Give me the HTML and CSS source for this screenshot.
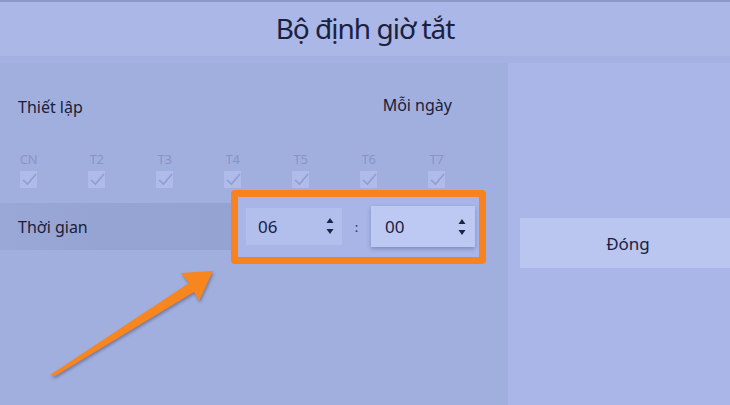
FILE: index.html
```html
<!DOCTYPE html>
<html lang="vi">
<head>
<meta charset="utf-8">
<link rel="stylesheet" href="styles.css">
</head>
<body>
<div class="screen">
  <header class="header"><h1 class="title">Bộ định giờ tắt</h1></header>
  <div class="main">
    <section class="left">
      <div class="setting">
        <span class="label">Thiết lập</span>
        <span class="value">Mỗi ngày</span>
      </div>
      <div class="days">
        <div class="day"><span class="dname">CN</span><span class="check"><svg viewBox="0 0 17 17"><path d="M3 9 L7.5 13 L16 3"/></svg></span></div>
        <div class="day"><span class="dname">T2</span><span class="check"><svg viewBox="0 0 17 17"><path d="M3 9 L7.5 13 L16 3"/></svg></span></div>
        <div class="day"><span class="dname">T3</span><span class="check"><svg viewBox="0 0 17 17"><path d="M3 9 L7.5 13 L16 3"/></svg></span></div>
        <div class="day"><span class="dname">T4</span><span class="check"><svg viewBox="0 0 17 17"><path d="M3 9 L7.5 13 L16 3"/></svg></span></div>
        <div class="day"><span class="dname">T5</span><span class="check"><svg viewBox="0 0 17 17"><path d="M3 9 L7.5 13 L16 3"/></svg></span></div>
        <div class="day"><span class="dname">T6</span><span class="check"><svg viewBox="0 0 17 17"><path d="M3 9 L7.5 13 L16 3"/></svg></span></div>
        <div class="day"><span class="dname">T7</span><span class="check"><svg viewBox="0 0 17 17"><path d="M3 9 L7.5 13 L16 3"/></svg></span></div>
      </div>
      <div class="time-row">
        <div class="time-label">Thời gian</div>
        <div class="picker">
          <div class="field hour">
            <span class="num">06</span>
            <svg class="spin" viewBox="0 0 8 18"><path d="M4 1 L7.5 6 L0.5 6 Z"/><path d="M0.5 12 L7.5 12 L4 17 Z"/></svg>
          </div>
          <div class="colon">:</div>
          <div class="field minute">
            <span class="num">00</span>
            <svg class="spin" viewBox="0 0 8 18"><path d="M4 1 L7.5 6 L0.5 6 Z"/><path d="M0.5 12 L7.5 12 L4 17 Z"/></svg>
          </div>
        </div>
      </div>
    </section>
    <section class="right">
      <div class="close-btn">Đóng</div>
    </section>
  </div>
  <svg class="arrow" viewBox="0 0 730 405">
    <polygon points="50,375 189,283 181,273 213,271 199,301 194,292 55,376"/>
  </svg>
</div>
</body>
</html>
```
FILE: styles.css
```css
* { box-sizing: border-box; }
html, body { margin: 0; padding: 0; }
body {
  width: 730px;
  height: 405px;
  overflow: hidden;
  background: #a6b3e3;
  font-family: "Noto Sans", "Open Sans", sans-serif;
  color: #1b2240;
}
.screen {
  position: relative;
  width: 730px;
  height: 405px;
  background: #a4b1e2;
}
.header {
  height: 56px;
  background: #aab7e7;
  border-top: 2px solid #8c98c6;
  display: flex;
  align-items: center;
  justify-content: center;
}
.title {
  margin: 0;
  font-size: 28px;
  font-weight: 400;
  letter-spacing: -1px;
  color: #1a2140;
  margin-top: -3px;
}
.main {
  display: flex;
  margin-top: 7px;
  height: 342px;
}
.left {
  width: 508px;
  background: #a1afdf;
}
.right {
  flex: 1;
  background: #a9b6e7;
  padding-top: 155px;
  padding-left: 12px;
}
.setting {
  margin-top: 24px;
  height: 40px;
  display: flex;
  align-items: center;
  justify-content: space-between;
  padding: 0 56px 0 18px;
  font-size: 16px;
  color: #1a2038;
}
.value { margin-top: -4px; }
.days {
  display: flex;
  gap: 51px;
  padding-left: 20px;
  margin-top: 24px;
  height: 39px;
}
.day {
  width: 17px;
  display: flex;
  flex-direction: column;
  align-items: center;
}
.dname {
  font-size: 13px;
  line-height: 17px;
  color: #8894c8;
  white-space: nowrap;
  letter-spacing: -0.3px;
}
.check {
  display: block;
  width: 17px;
  height: 17px;
  background: #afbbe9;
  margin-top: 3px;
}
.check svg {
  display: block;
  width: 17px;
  height: 17px;
  fill: none;
  stroke: #8f9dd2;
  stroke-width: 1.6;
}
.time-row {
  margin-top: 13px;
  height: 47px;
  display: flex;
  align-items: center;
}
.time-label {
  width: 231px;
  height: 47px;
  background: linear-gradient(90deg, #9aa8d8 0%, #96a4d4 40%, #95a3d3 100%);
  padding-left: 18px;
  display: flex;
  align-items: center;
  font-size: 16px;
  color: #1a2038;
}
.picker {
  width: 255px;
  height: 74px;
  flex: none;
  border: 7px solid #f7821e;
  border-radius: 4px;
  background: #a8b5e6;
  display: flex;
  align-items: center;
  padding: 0 4px 0 8px;
}
.field {
  display: flex;
  align-items: center;
  justify-content: space-between;
  font-size: 17px;
  color: #1a2140;
}
.hour {
  width: 96px;
  height: 37px;
  background: #b2beec;
  padding: 0 8px 0 12px;
  margin-top: -1px;
}
.minute {
  width: 104px;
  height: 41px;
  background: #bec9f3;
  padding: 0 9px 0 14px;
  box-shadow: 0 2px 4px rgba(55, 65, 120, 0.35);
}
.spin {
  width: 8px;
  height: 18px;
  fill: #1d2442;
}
.colon {
  width: 29px;
  text-align: center;
  font-size: 13px;
  color: #2a3150;
}
.close-btn {
  height: 50px;
  background: #bac5f0;
  display: flex;
  align-items: center;
  justify-content: center;
  font-size: 17px;
  color: #1a2140;
  padding-left: 6px;
}
.arrow {
  position: absolute;
  left: 0;
  top: 0;
  width: 730px;
  height: 405px;
  pointer-events: none;
  fill: #f7861f;
  filter: drop-shadow(1px 2px 1.5px rgba(60, 60, 90, 0.45));
}
```
